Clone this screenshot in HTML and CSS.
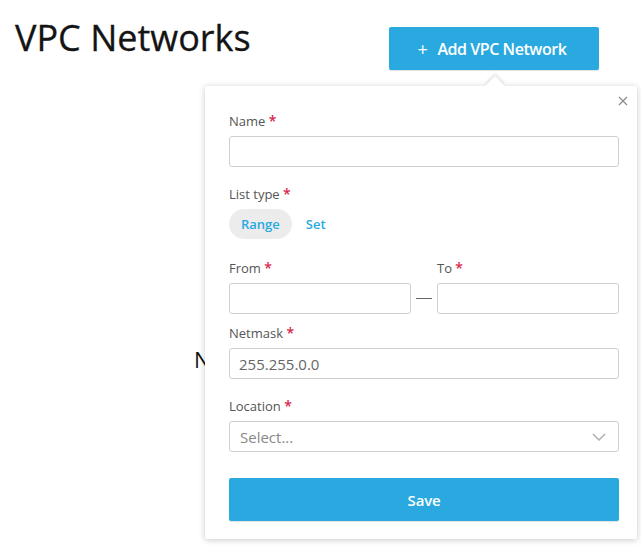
FILE: index.html
```html
<!DOCTYPE html>
<html>
<head>
<meta charset="utf-8">
<link rel="stylesheet" href="styles.css">
</head>
<body>
<header class="page-header">
  <h1 class="title">VPC Networks</h1>
  <button class="add-btn"><span class="plus">+</span>Add VPC Network</button>
</header>
<main class="empty-state">
  <p class="empty-text">No VPC Networks found</p>
</main>

<div class="popover">
  <span class="arrow"></span>
  <button class="close" aria-label="Close">
    <svg width="10" height="10" viewBox="0 0 10 10"><path d="M1 1L9 9M9 1L1 9" stroke="#8a8a8a" stroke-width="1.2" fill="none"/></svg>
  </button>
  <div class="field">
    <label class="label">Name <span class="req">*</span></label>
    <input class="input" type="text">
  </div>
  <div class="field type-field">
    <label class="label">List type <span class="req">*</span></label>
    <div class="toggle">
      <span class="pill active">Range</span>
      <span class="pill">Set</span>
    </div>
  </div>
  <div class="field range-field">
    <div class="range">
      <label class="label">From <span class="req">*</span></label>
      <span></span>
      <label class="label">To <span class="req">*</span></label>
      <input class="input" type="text">
      <span class="dash"></span>
      <input class="input" type="text">
    </div>
  </div>
  <div class="field">
    <label class="label">Netmask <span class="req">*</span></label>
    <input class="input" type="text" value="255.255.0.0">
  </div>
  <div class="field last">
    <label class="label">Location <span class="req">*</span></label>
    <div class="select">
      <span class="placeholder">Select...</span>
      <svg width="14" height="8" viewBox="0 0 14 8"><path d="M1 1L7 7L13 1" stroke="#b0b0b0" stroke-width="1.5" fill="none"/></svg>
    </div>
  </div>
  <button class="save">Save</button>
</div>
</body>
</html>
```
FILE: styles.css
```css
* { box-sizing: border-box; }
html, body { margin: 0; padding: 0; background: #fff; }
body {
  font-family: "Open Sans", "Noto Sans", sans-serif;
  color: #1a1a1a;
  width: 641px;
  height: 558px;
  overflow: hidden;
  position: relative;
}
.page-header {
  display: flex;
  align-items: flex-start;
  padding: 13px 42px 0 15px;
}
.title {
  margin: 0;
  font-size: 36px;
  font-weight: 400;
  line-height: 49px;
  color: #141414;
  -webkit-text-stroke: 0.3px #141414;
}
.add-btn {
  margin-left: auto;
  margin-top: 14px;
  width: 210px;
  height: 43px;
  border: none;
  border-radius: 2px;
  background: #29a9df;
  color: #fff;
  font-family: inherit;
  font-size: 16px;
  font-weight: 600;
  letter-spacing: -0.45px;
  display: flex;
  align-items: center;
  justify-content: center;
  box-shadow: 0 1px 1px rgba(0,0,0,0.12);
  padding: 0 4px 0 0;
}
.plus { font-weight: 400; font-size: 18px; margin-right: 10px; }
.empty-state { padding: 274px 0 0 194px; }
.empty-text { margin: 0; font-size: 22px; line-height: 30px; color: #111; }

.popover {
  position: absolute;
  left: 205px;
  top: 86px;
  width: 432px;
  padding: 26px 18px 18px 24px;
  background: #fff;
  box-shadow: 0 1px 6px rgba(0,0,0,0.22);
  border-radius: 2px;
}
.arrow {
  position: absolute;
  top: -7px;
  left: 283px;
  width: 14px;
  height: 14px;
  background: #fff;
  transform: rotate(45deg);
  box-shadow: -2px -2px 3px rgba(0,0,0,0.1);
}
.close {
  position: absolute;
  top: 10px;
  right: 9px;
  width: 10px;
  height: 10px;
  padding: 0;
  border: none;
  background: none;
  display: block;
}
.close svg { display: block; }
.field { margin-bottom: 18px; }
.field.type-field { margin-bottom: 20px; }
.field.range-field { margin-bottom: 10px; }
.field.last { margin-bottom: 26px; }
.label {
  display: block;
  font-size: 13px;
  line-height: 18px;
  color: #555;
  margin-bottom: 6px;
}
.req { color: #d8264a; font-weight: 600; font-size: 14px; }
.input {
  display: block;
  width: 100%;
  height: 31px;
  border: 1px solid #cfcfcf;
  border-radius: 3px;
  padding: 0 9px;
  font-family: inherit;
  font-size: 15px;
  color: #666;
  background: #fff;
}
.toggle { display: flex; align-items: center; }
.pill {
  height: 30px;
  line-height: 30px;
  padding: 0 12px;
  border-radius: 15px;
  font-size: 13px;
  font-weight: 600;
  color: #29a9df;
}
.pill.active { background: #ececec; margin-right: 2px; }
.range {
  display: grid;
  grid-template-columns: 1fr 26px 1fr;
  align-items: center;
}
.dash {
  display: block;
  height: 1.5px;
  background: #666;
  margin: 0 5px 0 5px;
}
.select {
  display: flex;
  align-items: center;
  justify-content: space-between;
  height: 31px;
  border: 1px solid #cfcfcf;
  border-radius: 3px;
  padding: 0 12px 0 10px;
}
.placeholder { font-size: 15px; color: #888; }
.select svg { display: block; }
.save {
  display: block;
  width: 100%;
  height: 43px;
  border: none;
  border-radius: 2px;
  background: #29a9df;
  color: #fff;
  font-family: inherit;
  font-size: 15px;
  font-weight: 600;
  letter-spacing: -0.2px;
  box-shadow: 0 1px 1px rgba(0,0,0,0.12);
}
```
